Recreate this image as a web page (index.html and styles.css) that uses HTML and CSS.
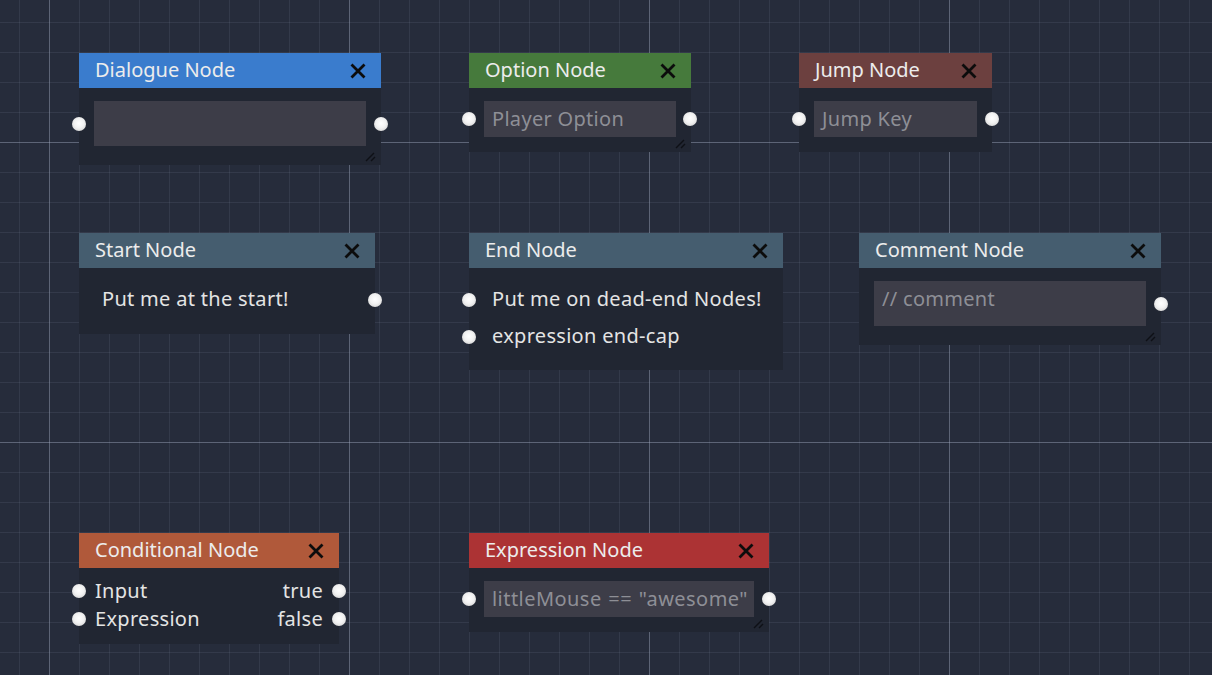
FILE: index.html
```html
<!DOCTYPE html>
<html>
<head>
<meta charset="utf-8">
<link rel="stylesheet" href="styles.css">
</head>
<body>
<div class="canvas">

  <div class="node n-dialogue">
    <div class="hdr hdr-blue"><span class="title">Dialogue Node</span><svg class="x" viewBox="0 0 16 16"><path d="M1.5 1.5L14.5 14.5M14.5 1.5L1.5 14.5"/></svg></div>
    <div class="body pad-box">
      <div class="row">
        <span class="port port-l"></span>
        <div class="box box-tall"></div>
        <span class="port port-r"></span>
      </div>
      <svg class="grip" viewBox="0 0 12 10"><path d="M1 9L9 1M6 9L10 5"/></svg>
    </div>
  </div>

  <div class="node n-option">
    <div class="hdr hdr-green"><span class="title">Option Node</span><svg class="x" viewBox="0 0 16 16"><path d="M1.5 1.5L14.5 14.5M14.5 1.5L1.5 14.5"/></svg></div>
    <div class="body pad-line">
      <div class="row">
        <span class="port port-l"></span>
        <div class="box box-line ph">Player Option</div>
        <span class="port port-r"></span>
      </div>
      <svg class="grip" viewBox="0 0 12 10"><path d="M1 9L9 1M6 9L10 5"/></svg>
    </div>
  </div>

  <div class="node n-jump">
    <div class="hdr hdr-brown"><span class="title">Jump Node</span><svg class="x" viewBox="0 0 16 16"><path d="M1.5 1.5L14.5 14.5M14.5 1.5L1.5 14.5"/></svg></div>
    <div class="body pad-line">
      <div class="row">
        <span class="port port-l"></span>
        <div class="box box-line ph">Jump Key</div>
        <span class="port port-r"></span>
      </div>
    </div>
  </div>

  <div class="node n-start">
    <div class="hdr hdr-slate"><span class="title">Start Node</span><svg class="x" viewBox="0 0 16 16"><path d="M1.5 1.5L14.5 14.5M14.5 1.5L1.5 14.5"/></svg></div>
    <div class="body pad-text">
      <div class="row trow">
        <span class="label">Put me at the start!</span>
        <span class="port port-r"></span>
      </div>
    </div>
  </div>

  <div class="node n-end">
    <div class="hdr hdr-slate"><span class="title">End Node</span><svg class="x" viewBox="0 0 16 16"><path d="M1.5 1.5L14.5 14.5M14.5 1.5L1.5 14.5"/></svg></div>
    <div class="body pad-text">
      <div class="row trow">
        <span class="port port-l"></span>
        <span class="label">Put me on dead-end Nodes!</span>
      </div>
      <div class="row trow">
        <span class="port port-l"></span>
        <span class="label">expression end-cap</span>
      </div>
    </div>
  </div>

  <div class="node n-comment">
    <div class="hdr hdr-slate"><span class="title">Comment Node</span><svg class="x" viewBox="0 0 16 16"><path d="M1.5 1.5L14.5 14.5M14.5 1.5L1.5 14.5"/></svg></div>
    <div class="body pad-box">
      <div class="row">
        <div class="box box-tall ph ph-top">// comment</div>
        <span class="port port-r"></span>
      </div>
      <svg class="grip" viewBox="0 0 12 10"><path d="M1 9L9 1M6 9L10 5"/></svg>
    </div>
  </div>

  <div class="node n-cond">
    <div class="hdr hdr-orange"><span class="title">Conditional Node</span><svg class="x" viewBox="0 0 16 16"><path d="M1.5 1.5L14.5 14.5M14.5 1.5L1.5 14.5"/></svg></div>
    <div class="body pad-cond">
      <div class="row crow">
        <span class="port port-l"></span>
        <span class="label">Input</span>
        <span class="label">true</span>
        <span class="port port-r"></span>
      </div>
      <div class="row crow">
        <span class="port port-l"></span>
        <span class="label">Expression</span>
        <span class="label">false</span>
        <span class="port port-r"></span>
      </div>
    </div>
  </div>

  <div class="node n-expr">
    <div class="hdr hdr-red"><span class="title">Expression Node</span><svg class="x" viewBox="0 0 16 16"><path d="M1.5 1.5L14.5 14.5M14.5 1.5L1.5 14.5"/></svg></div>
    <div class="body pad-line">
      <div class="row">
        <span class="port port-l"></span>
        <div class="box box-line ph ph-expr">littleMouse == "awesome"</div>
        <span class="port port-r"></span>
      </div>
      <svg class="grip" viewBox="0 0 12 10"><path d="M1 9L9 1M6 9L10 5"/></svg>
    </div>
  </div>

</div>
</body>
</html>
```

FILE: styles.css
```css
* { box-sizing: border-box; }
html, body { margin: 0; padding: 0; }
body {
  width: 1212px;
  height: 675px;
  overflow: hidden;
  font-family: "Noto Sans", "Open Sans", sans-serif;
  background: #262c3b;
}
.canvas {
  position: relative;
  width: 1212px;
  height: 675px;
  background-color: #262c3b;
  background-image:
    linear-gradient(to right, rgba(160,170,190,0.38) 1px, transparent 1px),
    linear-gradient(to bottom, rgba(160,170,190,0.38) 1px, transparent 1px),
    linear-gradient(to right, rgba(120,130,150,0.16) 1px, transparent 1px),
    linear-gradient(to bottom, rgba(120,130,150,0.16) 1px, transparent 1px);
  background-size: 300px 300px, 300px 300px, 30px 30px, 30px 30px;
  background-position: 49px 0, 0 142px, 19px 0, 0 22px;
}
.node {
  position: absolute;
  display: flex;
  flex-direction: column;
}
.n-dialogue { left: 79px; top: 53px; width: 302px; }
.n-option { left: 469px; top: 53px; width: 222px; }
.n-jump { left: 799px; top: 53px; width: 193px; }
.n-start { left: 79px; top: 233px; width: 296px; }
.n-end { left: 469px; top: 233px; width: 314px; }
.n-comment { left: 859px; top: 233px; width: 302px; }
.n-cond { left: 79px; top: 533px; width: 260px; }
.n-expr { left: 469px; top: 533px; width: 300px; }

.hdr {
  height: 35px;
  display: flex;
  align-items: center;
  justify-content: space-between;
  padding: 0 15px 0 16px;
  color: #ececec;
  font-size: 20px;
}
.title { line-height: 1; margin-top: -2px; }
.hdr-blue { background: #3a7ccd; }
.hdr-green { background: #467a3c; }
.hdr-brown { background: #6c403f; }
.hdr-slate { background: #455d6f; }
.hdr-orange { background: #b0593a; }
.hdr-red { background: #ac3334; }

.x {
  width: 16px;
  height: 16px;
  flex: none;
}
.x path {
  stroke: #0c0c0c;
  stroke-width: 2.8;
  fill: none;
}

.body {
  position: relative;
  background: #212632;
  display: flex;
  flex-direction: column;
}
.pad-box { padding: 13px 15px 19px 15px; }
.pad-line { padding: 13px 15px 15px 15px; }
.pad-text { padding: 13px 0 15px 23px; }
.pad-cond { padding: 9px 16px 11px 16px; }

.row {
  position: relative;
  display: flex;
  align-items: center;
}
.trow { height: 37px; }
.n-start .trow { height: 38px; }
.crow { height: 28px; justify-content: space-between; }

.box {
  flex: 1;
  background: #3d3d48;
  color: #8e8f96;
  font-size: 20px;
  letter-spacing: 0.3px;
  padding-left: 8px;
  white-space: nowrap;
  overflow: hidden;
}
.box-tall { height: 45px; }
.box-line { height: 36px; display: flex; align-items: center; padding-bottom: 2px; }
.ph-top { padding-top: 6px; line-height: 1.2; }
.ph-expr { letter-spacing: 0.45px; word-spacing: 1px; }

.label {
  color: #e4e4e4;
  font-size: 20px;
  letter-spacing: 0.3px;
  white-space: nowrap;
  line-height: 1;
  margin-top: -2px;
}

.port {
  position: absolute;
  top: 50%;
  width: 14px;
  height: 14px;
  margin-top: -7px;
  border-radius: 50%;
  background: radial-gradient(circle at 50% 45%, #ffffff 0%, #f2f2f2 45%, #c8c8c8 100%);
}
.n-dialogue .port-l, .n-comment .port-l, .n-option .port-l, .n-jump .port-l, .n-expr .port-l { left: -22px; }
.n-dialogue .port-r, .n-comment .port-r, .n-option .port-r, .n-jump .port-r, .n-expr .port-r { right: -22px; }
.n-start .port-r { right: -7px; }
.n-end .port-l { left: -30px; }
.n-cond .port-l { left: -23px; }
.n-cond .port-r { right: -23px; }
.n-cond .label { margin-top: -1px; }
.n-option .port-r { right: -21px; }

.grip {
  position: absolute;
  right: 4px;
  bottom: 3px;
  width: 12px;
  height: 10px;
}
.grip path {
  stroke: #0e1016;
  stroke-width: 1.4;
  fill: none;
}
```
